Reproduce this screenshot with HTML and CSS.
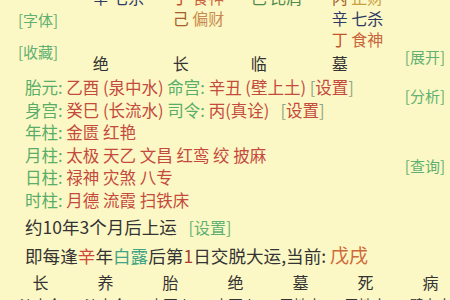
FILE: index.html
```html
<!DOCTYPE html>
<html lang="zh">
<head>
<meta charset="utf-8">
<title>排盘</title>
<link rel="stylesheet" href="styles.css">
</head>
<body>
<div class="page">
  <section class="top">
    <div class="tools">
      <span class="link">[字体]</span>
      <span class="link">[收藏]</span>
    </div>
    <div class="stems">
      <div class="grid">
        <span><span class="navy">辛</span> <span class="navy">七杀</span></span>
        <span><span class="rust">丁</span> <span class="orange">食神</span></span>
        <span><span class="olive">己</span> <span class="olive">比肩</span></span>
        <span><span class="brown">丙</span> <span class="gold">正财</span></span>
        <span></span>
        <span><span class="brown">己</span> <span class="tan">偏财</span></span>
        <span></span>
        <span><span class="navy">辛</span> <span class="navy">七杀</span></span>
        <span></span>
        <span></span>
        <span></span>
        <span><span class="rust">丁</span> <span class="orange">食神</span></span>
      </div>
      <div class="grid stages">
        <span>绝</span><span>长</span><span>临</span><span>墓</span>
      </div>
    </div>
    <div class="actions"><span class="link">[展开]</span></div>
  </section>

  <section class="info">
    <div class="rows">
      <p><span class="lbl">胎元:</span> <span class="val">乙酉 (泉中水)</span> <span class="lbl">命宫:</span> <span class="val">辛丑 (壁上土)</span> <span class="set">[<span class="val">设置</span>]</span></p>
      <p><span class="lbl">身宫:</span> <span class="val">癸巳 (长流水)</span> <span class="lbl">司令:</span> <span class="val">丙(真诠)</span>&nbsp;&nbsp; <span class="set">[<span class="val">设置</span>]</span></p>
      <p><span class="lbl">年柱:</span> <span class="val">金匮 红艳</span></p>
      <p><span class="lbl">月柱:</span> <span class="val">太极 天乙 文昌 红鸾 绞 披麻</span></p>
      <p><span class="lbl">日柱:</span> <span class="val">禄神 灾煞 八专</span></p>
      <p><span class="lbl">时柱:</span> <span class="val">月德 流霞 扫铁床</span></p>
    </div>
    <div class="side">
      <span class="link">[分析]</span>
      <span class="link">[查询]</span>
    </div>
  </section>

  <p class="luck">约10年3个月后上运 <span class="link">[设置]</span></p>
  <p class="jiao">即每逢<span class="red">辛</span>年<span class="teal">白露</span>后第<span class="dred">1</span>日交脱大运,当前: <span class="cur">戊戌</span></p>

  <div class="cols">
    <span>长</span><span>养</span><span>胎</span><span>绝</span><span>墓</span><span>死</span><span>病</span>
  </div>
  <div class="cols nayin">
    <span>沙中金</span><span>沙中金</span><span>山下火</span><span>山下火</span><span>平地木</span><span>平地木</span><span>壁上土</span>
  </div>
</div>
</body>
</html>
```

FILE: styles.css
```css
* { margin: 0; padding: 0; box-sizing: border-box; }
html, body { background: #fcf8c5; }
body {
  font-family: "Noto Sans CJK SC", "Noto Sans", sans-serif;
  color: #333;
  width: 450px;
  height: 300px;
  overflow: hidden;
}
.page { width: 470px; }

.link { color: #5fb072; }
.navy { color: #2e3866; }
.rust { color: #c4532c; }
.orange { color: #c8653c; }
.olive { color: #4f8a4c; }
.brown { color: #a4622c; }
.gold { color: #c9a246; }
.tan { color: #c98a50; }

.top { display: flex; margin-top: -13px; width: 450px; }
.tools {
  width: 94px;
  padding: 23px 0 0 18px;
  display: flex;
  flex-direction: column;
  gap: 12px;
  font-size: 15px;
  line-height: 20px;
}
.stems { width: 318px; font-size: 16px; }
.grid {
  display: grid;
  grid-template-columns: 80px 78px 81px 1fr;
  grid-auto-rows: 21px;
  line-height: 21px;
  white-space: nowrap;
}
.stages { margin-top: 3px; color: #333; }
.actions {
  margin-left: auto;
  padding: 60px 5px 0 0;
  font-size: 15px;
  line-height: 20px;
  white-space: nowrap;
}

.info { display: flex; margin-top: 2px; width: 450px; }
.rows {
  padding-left: 25px;
  font-size: 16.5px;
  line-height: 22.6px;
  white-space: nowrap;
}
.lbl { color: #58ad69; }
.val { color: #c54a3e; }
.set { color: #8fa487; }
.side {
  margin-left: auto;
  padding: 10px 5px 0 0;
  display: flex;
  flex-direction: column;
  gap: 50px;
  font-size: 15px;
  line-height: 20px;
  white-space: nowrap;
}

.luck {
  margin-top: 3.5px;
  padding-left: 25px;
  font-size: 17.5px;
  line-height: 24px;
  color: #333;
}
.luck .link { font-size: 16px; margin-left: 8px; }
.jiao {
  margin-top: 3px;
  padding-left: 25px;
  font-size: 17.6px;
  line-height: 26px;
  color: #333;
  white-space: nowrap;
}
.red { color: #d0473a; }
.teal { color: #3fa585; }
.dred { color: #a8402f; }
.cur { color: #cc6a3a; font-size: 19px; }

.cols {
  display: grid;
  grid-template-columns: repeat(7, 65px);
  padding-left: 8px;
  margin-top: 1px;
  text-align: center;
  font-size: 16px;
  line-height: 24px;
  color: #333;
}
.nayin { margin-top: 0; font-size: 14px; line-height: 20px; }
```
